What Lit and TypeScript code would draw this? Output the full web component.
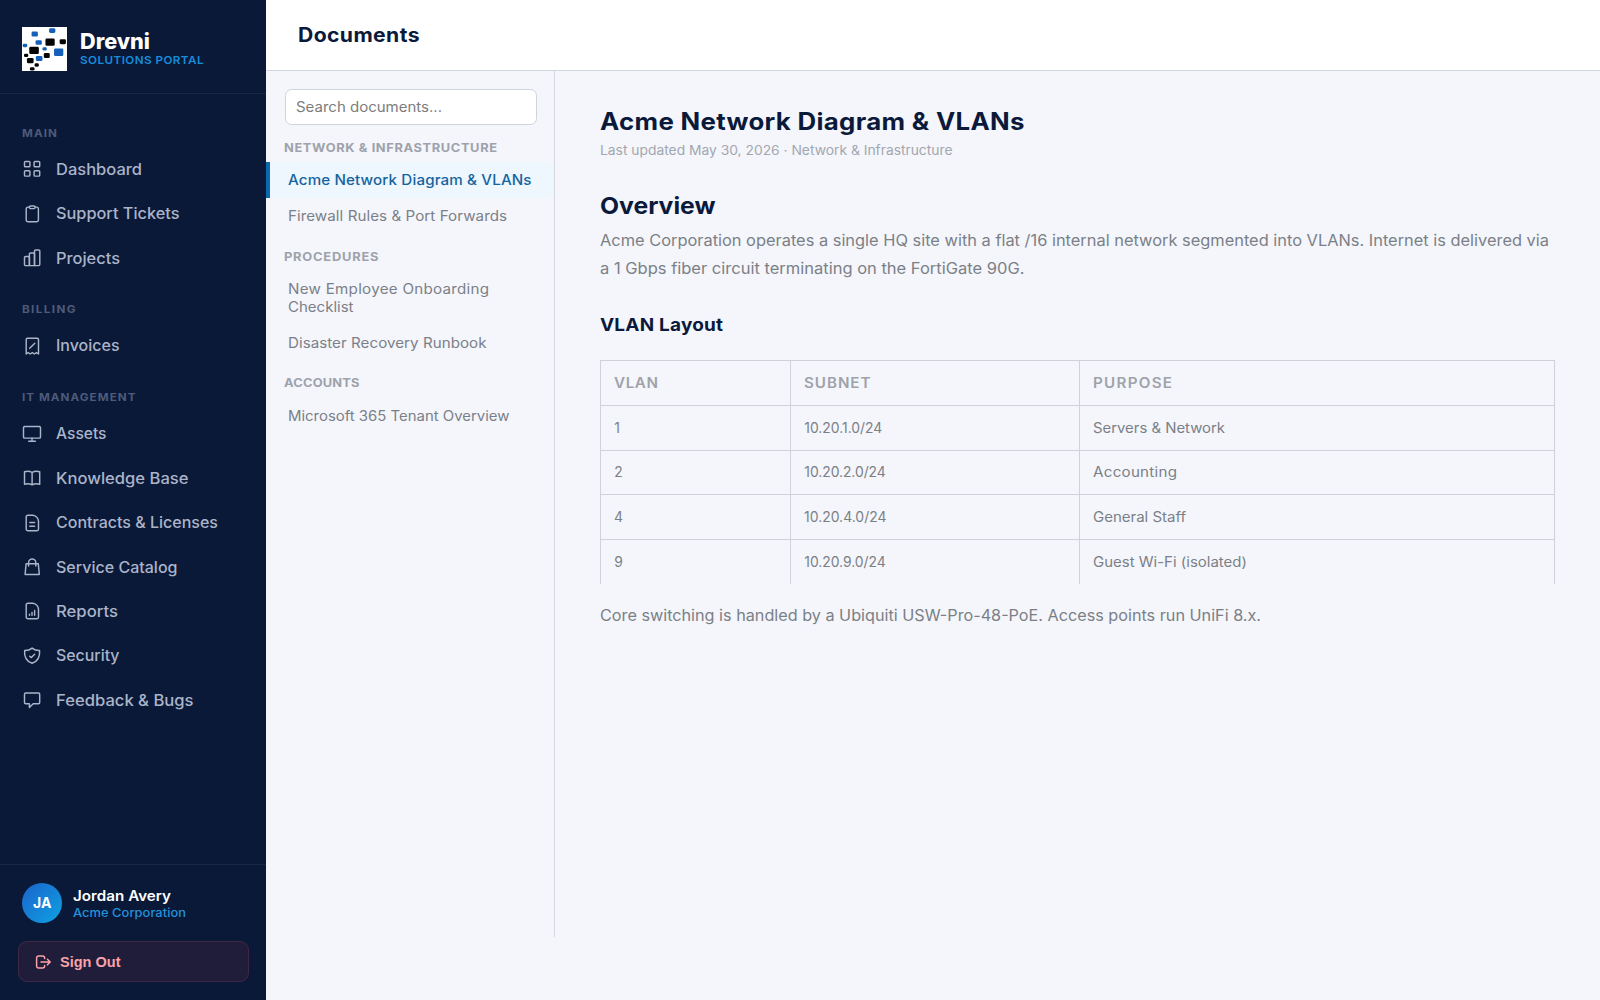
import { LitElement, html, css, svg } from "lit";
import { customElement, property } from "lit/decorators.js";
import { classMap } from "lit/directives/class-map.js";

/** Widest horizontal stretch given to glyphs before tracking takes over. */
const MAX_STRETCH = 1.09;

/** One line of text, widened and tracked so that it fills a given measure. */
@customElement("tracked-text")
class TrackedText extends LitElement {
  @property() text = "";
  @property({ type: Number }) measure = 0;

  static styles = css`
    :host { display: block; white-space: nowrap; }
    .line { display: inline-block; transform-origin: 0 50%; }
  `;

  updated() {
    const line = this.renderRoot.querySelector(".line") as HTMLElement;
    line.style.transform = "none";
    line.style.letterSpacing = "0px";
    const natural = line.getBoundingClientRect().width;
    const stretch = Math.min(MAX_STRETCH, Math.max(1, this.measure / natural));
    const gaps = Math.max(1, this.text.length - 1);
    const tracking = (this.measure / stretch - natural) / gaps;
    line.style.letterSpacing = `${tracking.toFixed(3)}px`;
    line.style.transform = stretch > 1 ? `scaleX(${stretch.toFixed(4)})` : "none";
  }

  render() {
    return html`<span class="line">${this.text}</span>`;
  }
}

const t = (text: string, measure: number) =>
  html`<tracked-text .text=${text} .measure=${measure}></tracked-text>`;

const docShape = svg`<path d="M6 2.2H10.8C13.9 2.6 16.3 5.2 16.5 8.4V16A1.8 1.8 0 0 1 14.7 17.8H6A1.8 1.8 0 0 1 4.2 16V4A1.8 1.8 0 0 1 6 2.2Z"/>`;

const icons: Record<string, unknown> = {
  grid: svg`<rect x="2.5" y="2.4" width="5.4" height="5.4" rx="0.9"/><rect x="12.1" y="2.4" width="5.6" height="5.4" rx="0.9"/><rect x="2.5" y="11.7" width="5.4" height="5.4" rx="0.9"/><rect x="12.1" y="11.7" width="5.6" height="5.4" rx="0.9"/>`,
  clipboard: svg`<path d="M7.3 3.1H6A1.8 1.8 0 0 0 4.2 4.9V16A1.8 1.8 0 0 0 6 17.8H14.6A1.8 1.8 0 0 0 16.4 16V4.9A1.8 1.8 0 0 0 14.6 3.1H13.2"/><rect x="7.3" y="2" width="5.9" height="2.6" rx="1.3"/>`,
  bars: svg`<path d="M7.4 17.6H3.6A1.1 1.1 0 0 1 2.5 16.5V9.6A1.1 1.1 0 0 1 3.6 8.5H6.3A1.1 1.1 0 0 1 7.4 9.6Z"/><path d="M7.4 17.6V6A1.1 1.1 0 0 1 8.5 4.9H11.4A1.1 1.1 0 0 1 12.5 6V17.6Z"/><path d="M12.5 17.6V3.1A1.1 1.1 0 0 1 13.6 2H16.7A1.1 1.1 0 0 1 17.8 3.1V16.5A1.1 1.1 0 0 1 16.7 17.6Z"/>`,
  receipt: svg`<path d="M4.2 18V3.4A1.2 1.2 0 0 1 5.4 2.2H15.3A1.2 1.2 0 0 1 16.5 3.4V18L14.4 16.7L12.4 18L10.3 16.7L8.3 18L6.2 16.7Z"/><path d="M7.7 12.2L12.8 7.2"/>`,
  monitor: svg`<rect x="1.5" y="2.5" width="17" height="11.6" rx="1.2"/><path d="M10 14.2V17.3M6.7 17.3H13.4"/>`,
  book: svg`<path d="M10.1 4.5C7.8 3 5 2.9 2.5 3.8V16.2C5 15.4 7.8 15.5 10.1 16.8C12.4 15.5 15.2 15.4 17.7 16.2V3.8C15.2 2.9 12.4 3 10.1 4.5ZM10.1 4.5V16.6"/>`,
  doc: svg`${docShape}<path d="M7.8 9.4H12.6M7.8 13.2H12.6"/>`,
  bag: svg`<path d="M4.1 6.8H16.3L17.3 17.4H3.1Z"/><path d="M6.6 9V5.4A3.6 3.4 0 0 1 13.8 5.4V9"/>`,
  report: svg`${docShape}<path d="M7.5 14.3V13.1M10 14.3V11.4M12.6 14.3V9.5"/>`,
  shield: svg`<path d="M10.1 2.1C8 3.8 5.3 4.6 2.6 4.5C2.1 10.6 3.9 15.2 10.1 17.3C16.3 15.2 18.1 10.6 17.6 4.5C14.9 4.6 12.2 3.8 10.1 2.1Z"/><path d="M7.7 10.2L9.4 11.6L12.6 8.3"/>`,
  chat: svg`<path d="M3.7 3H16.5A1.2 1.2 0 0 1 17.7 4.2V12.6A1.2 1.2 0 0 1 16.5 13.8H11.2L7.4 17.6V13.8H3.7A1.2 1.2 0 0 1 2.5 12.6V4.2A1.2 1.2 0 0 1 3.7 3Z"/>`,
};

type Item = { icon: string; label: string; w: number };
const nav: { title: string; w: number; items: Item[] }[] = [
  {
    title: "MAIN", w: 35,
    items: [
      { icon: "grid", label: "Dashboard", w: 86 },
      { icon: "clipboard", label: "Support Tickets", w: 123.5 },
      { icon: "bars", label: "Projects", w: 64 },
    ],
  },
  { title: "BILLING", w: 53.5, items: [{ icon: "receipt", label: "Invoices", w: 63.5 }] },
  {
    title: "IT MANAGEMENT", w: 113.5,
    items: [
      { icon: "monitor", label: "Assets", w: 50.5 },
      { icon: "book", label: "Knowledge Base", w: 132.5 },
      { icon: "doc", label: "Contracts & Licenses", w: 162 },
      { icon: "bag", label: "Service Catalog", w: 121.5 },
      { icon: "report", label: "Reports", w: 62 },
      { icon: "shield", label: "Security", w: 63.5 },
      { icon: "chat", label: "Feedback & Bugs", w: 137.5 },
    ],
  },
];

type Line = [string, number];
const docs: { title: Line; items: { lines: Line[]; active?: boolean }[] }[] = [
  {
    title: ["NETWORK & INFRASTRUCTURE", 213],
    items: [
      { lines: [["Acme Network Diagram & VLANs", 243.5]], active: true },
      { lines: [["Firewall Rules & Port Forwards", 219]] },
    ],
  },
  {
    title: ["PROCEDURES", 94.5],
    items: [
      { lines: [["New Employee Onboarding", 201], ["Checklist", 65.5]] },
      { lines: [["Disaster Recovery Runbook", 198.5]] },
    ],
  },
  { title: ["ACCOUNTS", 75.5], items: [{ lines: [["Microsoft 365 Tenant Overview", 221.5]] }] },
];

const rows: [Line, Line, Line][] = [
  [["1", 5], ["10.20.1.0/24", 78], ["Servers & Network", 132]],
  [["2", 8], ["10.20.2.0/24", 81.5], ["Accounting", 84]],
  [["4", 9], ["10.20.4.0/24", 82.5], ["General Staff", 93]],
  [["9", 8], ["10.20.9.0/24", 81.5], ["Guest Wi-Fi (isolated)", 154]],
];

const blueTiles = [[29, 14, 19, 15], [82, 4, 19, 14], [41, 40, 19, 14], [2, 51, 14, 10], [62, 61, 13, 10], [97, 65, 28, 23], [42, 88, 20, 15]];
const blackTiles = [[71, 35, 28, 22], [114, 37, 19, 15], [22, 60, 29, 22], [6, 81, 13, 10], [66, 79, 18, 15], [15, 94, 20, 16], [38, 110, 13, 10], [24, 122, 14, 10]];
const tile = (kind: string) => ([x, y, w, h]: number[]) =>
  svg`<rect class=${kind} x=${x} y=${y} width=${w} height=${h} rx="4"/>`;

@customElement("app-root")
class AppRoot extends LitElement {
  static styles = css`
    :host {
      display: flex; width: 1600px; height: 1000px; overflow: hidden;
      background: #f4f6fb; font-family: Inter, "Open Sans", sans-serif; color: #0b1a3b;
    }
    * { box-sizing: border-box; }
    .sidebar {
      width: 266px; flex: none; background: #0a1938;
      display: flex; flex-direction: column;
    }
    .brand {
      height: 94.3px; padding: 26.6px 22.2px 0; display: flex; gap: 13.2px;
      border-bottom: 1px solid #18274a;
    }
    .logo { width: 44.6px; height: 44.6px; background: #fff; flex: none; }
    .blue { fill: #1560b8; }
    .black { fill: #050505; }
    .brand-name { font-size: 21.2px; font-weight: 800; color: #fff; line-height: 26px; margin-top: 1.2px; }
    .brand-sub { font-size: 10.7px; font-weight: 600; color: #168ddb; line-height: 14px; margin-top: 0.2px; }
    .nav { flex: 1; padding-top: 28.3px; }
    .group { margin-bottom: 19px; }
    .group-title { padding-left: 22.4px; font-size: 10.7px; font-weight: 700; color: #4e5b79; line-height: 22px; height: 24.5px; }
    .item {
      height: 44.4px; padding-left: 22.2px; display: flex; align-items: center; gap: 13.5px;
      font-size: 15.5px; font-weight: 450; color: #abb4c8;
    }
    .icon { width: 20px; height: 20px; fill: none; stroke: #abb4c8; stroke-width: 1.45; stroke-linecap: round; stroke-linejoin: round; flex: none; }
    .footer { height: 135.7px; border-top: 1px solid #18274a; padding: 17.6px 17.6px 0; }
    .user { display: flex; gap: 10.6px; padding-left: 4.6px; }
    .avatar {
      width: 40px; height: 40px; border-radius: 50%; color: #fff; font-size: 14px; font-weight: 700;
      background: linear-gradient(135deg, #1b63cb, #0ea2e2);
      display: flex; align-items: center; justify-content: center;
    }
    .user-name { color: #fff; font-size: 13.9px; font-weight: 600; line-height: 18px; margin-top: 4.2px; }
    .user-org { color: #2392da; font-size: 11.8px; font-weight: 450; line-height: 16px; }
    .signout {
      margin-top: 18px; width: 231px; height: 41.5px; border-radius: 9px;
      border: 1px solid #402845; background: #201d3a; color: #f9a2a8;
      display: flex; align-items: center; gap: 8.6px; padding: 1px 0 0 16px;
      font: 700 14.4px "Liberation Sans", Arial, sans-serif;
    }
    .exit { width: 17px; height: 16px; fill: none; stroke: #f9a2a8; stroke-width: 1.5; stroke-linecap: round; stroke-linejoin: round; }
    .main { flex: 1; min-width: 0; display: flex; flex-direction: column; }
    .header {
      height: 71px; flex: none; background: #fff; border-bottom: 1px solid #d2d6e0;
      padding: 0 0 0 32px; display: flex; align-items: center; font-size: 19.4px; font-weight: 700;
    }
    .body { display: flex; flex: 1; }
    .docs { width: 289px; height: 866.3px; border-right: 1px solid #d5d8e0; padding-top: 18px; flex: none; }
    .search {
      margin: 0 17.4px 0 18.6px; height: 35.6px; border: 1px solid #cfd3de; border-radius: 6.5px; background: #fff;
      display: flex; align-items: center; padding-left: 10.8px; font-size: 13.9px; color: #7c7c7c;
    }
    .doc-title { padding-left: 18.4px; font-size: 11.8px; font-weight: 650; color: #9ea2ac; line-height: 15px; margin: 16px 0 6.4px; }
    .doc {
      padding: 10px 0 8px 17.6px; line-height: 17.8px; font-size: 13.9px; color: #7b8088;
      border-left: 4px solid transparent;
    }
    .doc.active { border-left-color: #0b69ae; background: #eef6fe; color: #15649f; font-weight: 480; }
    .article { flex: 1; padding: 33.6px 44.5px 0 45px; }
    .title { font-size: 23.7px; font-weight: 700; line-height: 34px; }
    .updated { font-size: 12.9px; color: #a3a7b0; line-height: 20px; margin-top: 2.6px; }
    .h2 { font-size: 23.3px; font-weight: 700; line-height: 30px; margin-top: 29.4px; }
    .para { font-size: 15.5px; line-height: 27.8px; color: #7b8087; }
    .para-first { margin-top: 6.2px; }
    .h3 { font-size: 17.4px; font-weight: 700; line-height: 24px; margin: 31px 0 23px; }
    .table { display: grid; grid-template-columns: 190px 289px 1fr; border: 1px solid #cfd2da; border-bottom: none; width: 955px; }
    .cell { height: 44.6px; padding: 0 0 0 13.3px; display: flex; align-items: center; font-size: 13.9px; color: #7b8087; border-right: 1px solid #cfd2da; border-bottom: 1px solid #cfd2da; }
    .cell:nth-child(3n) { border-right: none; }
    .cell:nth-last-child(-n + 3) { border-bottom: none; }
    .cell.head { font-weight: 600; color: #9ea2aa; }
    .para-last { margin-top: 18px; }
  `;

  render() {
    return html`
      <aside class="sidebar">
        <div class="brand">
          <svg class="logo" viewBox="0 0 135 135">${blueTiles.map(tile("blue"))}${blackTiles.map(tile("black"))}</svg>
          <div>
            <div class="brand-name">${t("Drevni", 70)}</div>
            <div class="brand-sub">${t("SOLUTIONS PORTAL", 123.5)}</div>
          </div>
        </div>
        <nav class="nav">
          ${nav.map((g) => html`
            <div class="group">
              <div class="group-title">${t(g.title, g.w)}</div>
              ${g.items.map((i) => html`
                <div class="item"><svg class="icon" viewBox="0 0 20 20">${icons[i.icon]}</svg>${t(i.label, i.w)}</div>`)}
            </div>`)}
        </nav>
        <div class="footer">
          <div class="user">
            <div class="avatar">JA</div>
            <div>
              <div class="user-name">${t("Jordan Avery", 98)}</div>
              <div class="user-org">${t("Acme Corporation", 113)}</div>
            </div>
          </div>
          <button class="signout">
            <svg class="exit" viewBox="0 0 17 16"><path d="M9.6 4.4V4A2 2 0 0 0 7.6 2H3.6A2 2 0 0 0 1.6 4V12A2 2 0 0 0 3.6 14H7.6A2 2 0 0 0 9.6 12V11.6M6 8H15M12.4 5.2L15.2 8L12.4 10.8"/></svg>
            ${t("Sign Out", 60.5)}
          </button>
        </div>
      </aside>
      <main class="main">
        <header class="header">${t("Documents", 121.5)}</header>
        <div class="body">
          <section class="docs">
            <div class="search">${t("Search documents...", 146)}</div>
            ${docs.map((g) => html`
              <div class="doc-group">
                <div class="doc-title">${t(...g.title)}</div>
                ${g.items.map((d) => html`
                  <div class=${classMap({ doc: true, active: !!d.active })}>${d.lines.map((l) => t(...l))}</div>`)}
              </div>`)}
          </section>
          <article class="article">
            <div class="title">${t("Acme Network Diagram & VLANs", 424.5)}</div>
            <div class="updated">${t("Last updated May 30, 2026 · Network & Infrastructure", 352.5)}</div>
            <div class="h2">${t("Overview", 115.5)}</div>
            <div class="para para-first">
              ${t("Acme Corporation operates a single HQ site with a flat /16 internal network segmented into VLANs. Internet is delivered via", 949)}
              ${t("a 1 Gbps fiber circuit terminating on the FortiGate 90G.", 424.5)}
            </div>
            <div class="h3">${t("VLAN Layout", 123)}</div>
            <div class="table">
              <div class="cell head">${t("VLAN", 44)}</div>
              <div class="cell head">${t("SUBNET", 66.5)}</div>
              <div class="cell head">${t("PURPOSE", 79)}</div>
              ${rows.map((r) => r.map((c) => html`<div class="cell">${t(...c)}</div>`))}
            </div>
            <div class="para para-last">${t("Core switching is handled by a Ubiquiti USW-Pro-48-PoE. Access points run UniFi 8.x.", 661)}</div>
          </article>
        </div>
      </main>
    `;
  }
}
